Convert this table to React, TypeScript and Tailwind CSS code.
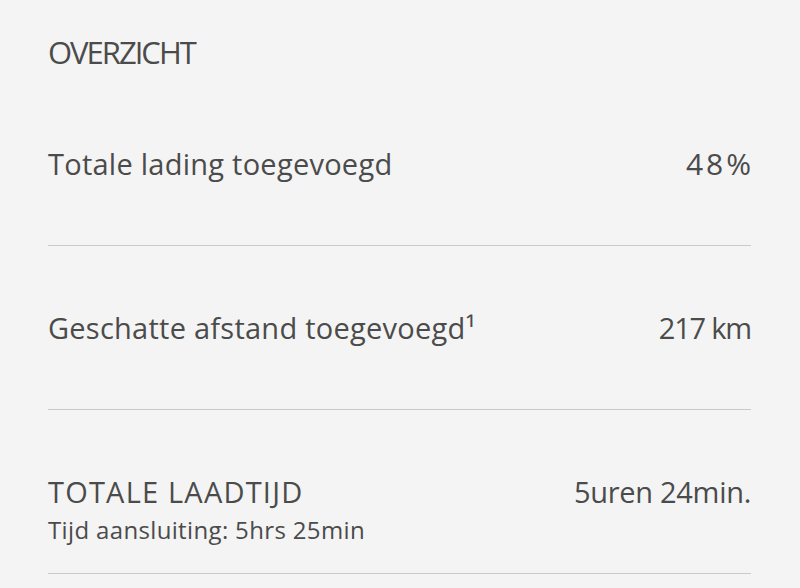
import React from "react"

const rows = [
  { label: "Totale lading toegevoegd", value: "48%", valueClass: "-mr-[3px] text-[30px] tracking-[3px]" },
  { label: "Geschatte afstand toegevoegd", sup: "¹", value: "217 km", valueClass: "tracking-[-1.2px]" },
]

export default function App() {
  return (
    <div
      className="min-h-[588px] w-[800px] bg-[#f4f4f4] pl-12 pr-[49px] text-[#4b4b4b]"
      style={{ fontFamily: '"Open Sans", "Liberation Sans", sans-serif' }}
    >
      <div className="flex h-[82px] items-end pb-[14px]">
        <h2 className="text-[31px] leading-none tracking-[-2px]">OVERZICHT</h2>
      </div>

      {rows.map((row) => (
        <div
          key={row.label}
          className="flex items-center justify-between border-b border-[#c9c9c9] pt-16 pb-[63px] text-[29px] leading-[36px]"
        >
          <span className="tracking-[0.25px]">
            {row.label}
            {row.sup}
          </span>
          <span className={row.valueClass}>{row.value}</span>
        </div>
      ))}

      <div className="flex items-start justify-between border-b border-[#c9c9c9] pt-[65px] pb-[29px]">
        <div>
          <div className="text-[29px] leading-[34px] tracking-[1.2px]">TOTALE LAADTIJD</div>
          <div className="mt-[7px] text-[24px] leading-[28px] tracking-[0.35px]">Tijd aansluiting: 5hrs 25min</div>
        </div>
        <div className="text-[29px] leading-[34px] tracking-[-0.3px]">5uren 24min.</div>
      </div>
    </div>
  )
}
